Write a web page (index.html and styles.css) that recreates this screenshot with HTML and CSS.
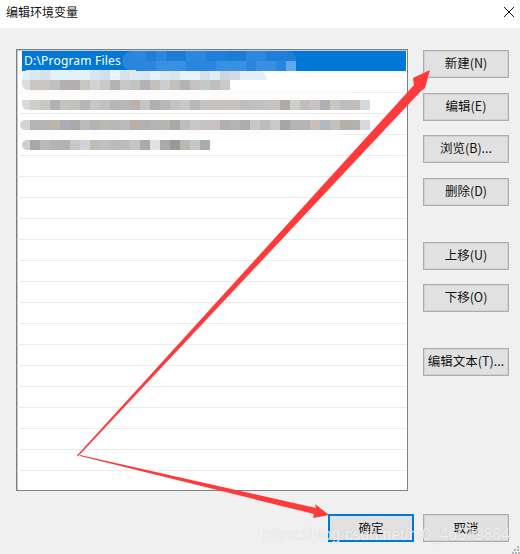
FILE: index.html
```html
<!DOCTYPE html>
<html lang="zh-CN">
<head>
<meta charset="utf-8">
<title>编辑环境变量</title>
<link rel="stylesheet" href="styles.css">
</head>
<body>
<div class="dialog">
  <header class="titlebar">
    <span class="title">编辑环境变量</span>
    <svg class="close" width="12" height="12" viewBox="0 0 12 12"><path d="M1 1 L11 11 M11 1 L1 11" stroke="#111" stroke-width="1" fill="none"/></svg>
  </header>
  <main class="content">
    <div class="list">
      <div class="row selected">D:\Program Files</div>
      <div class="row"></div><div class="row"></div><div class="row"></div><div class="row"></div>
      <div class="row"></div><div class="row"></div><div class="row"></div><div class="row"></div>
      <div class="row"></div><div class="row"></div><div class="row"></div><div class="row"></div>
      <div class="row"></div><div class="row"></div><div class="row"></div><div class="row"></div>
      <div class="row"></div><div class="row"></div><div class="row"></div>
      <div class="smear blue-top"></div>
      <div class="smear blue-bottom"></div>
      <div class="smear blue-cap"></div>
      <div class="smear white-a"></div>
      <div class="smear white-b"></div>
      <div class="smear pale"></div>
      <div class="smear grey-a"></div>
      <div class="smear grey-b"></div>
      <div class="smear grey-c"></div>
      <div class="smear grey-d"></div>
    </div>
    <div class="side">
      <div class="group">
        <button class="btn">新建(N)</button>
        <button class="btn">编辑(E)</button>
        <button class="btn">浏览(B)...</button>
        <button class="btn">删除(D)</button>
      </div>
      <div class="group">
        <button class="btn">上移(U)</button>
        <button class="btn">下移(O)</button>
      </div>
      <div class="group">
        <button class="btn">编辑文本(T)...</button>
      </div>
    </div>
  </main>
  <footer class="footer">
    <button class="btn primary">确定</button>
    <button class="btn">取消</button>
  </footer>
  <svg class="arrows" width="520" height="554" viewBox="0 0 520 554">
    <polygon points="77,455.5 414,85 413,78 430,70 425,88 421,91 78,456.5" fill="#fe3a3a"/>
    <polygon points="80,455 316,508 315,504 329,515 313,518 314,514 80,456" fill="#fe3a3a"/>
  </svg>
  <div class="watermark">https://blog.csdn.net/m0_46579864</div>
  <svg class="grip" width="8" height="8" viewBox="0 0 8 8"><path d="M5 0h2v2H5zM2 3h2v2H2zM5 3h2v2H5zM0 6h2v2H0zM3 6h2v2H3zM6 6h2v2H6z" fill="#b4b4b4"/></svg>
</div>
</body>
</html>
```
FILE: styles.css
```css
* { box-sizing: border-box; }
html, body { margin: 0; padding: 0; }
body {
  width: 520px;
  height: 554px;
  overflow: hidden;
  background: #f0f0f0;
  font-family: "Noto Sans CJK SC", "Noto Sans", sans-serif;
  color: #000;
}
.dialog {
  position: relative;
  width: 520px;
  height: 554px;
  display: flex;
  flex-direction: column;
}
.titlebar {
  height: 28px;
  background: #fff;
  display: flex;
  align-items: center;
  justify-content: space-between;
  padding: 0 5px 4px 6px;
}
.title { font-size: 12px; line-height: 16px; color: #111; }
.close { display: block; }
.content {
  display: flex;
  align-items: flex-start;
  padding: 21px 11px 0 16px;
  gap: 15px;
}
.list {
  position: relative;
  width: 392px;
  height: 442px;
  background: #fff;
  border: 1px solid #7b8087;
  box-shadow: inset 1px 1px 0 #c6c8cb;
  padding: 1px 1px 1px 5px;
  overflow: hidden;
}
.row {
  height: 21px;
  margin-left: -5px;
  border-bottom: 1px solid #ebebeb;
}
.row.selected {
  margin-left: 0;
  height: 20px;
  margin-bottom: 1px;
  border-bottom: 0;
  background: #0078d7;
  color: #fff;
  font-family: "Noto Sans", sans-serif;
  font-size: 12px;
  line-height: 20px;
  padding-left: 2px;
  letter-spacing: 0.2px;
}
.smear { position: absolute; height: 10px; }
.blue-cap { left: 105px; top: 1px; width: 30px; height: 20px; background: #2a86dc; border-radius: 10px 0 0 10px; }
.blue-top {
  left: 119px; top: 1px; width: 160px;
  background: linear-gradient(90deg, #2a88dd 0 10px, #1e80da 10px 20px, #2a88de 20px 30px, #1a7ed9 30px 50px, #2a88dd 50px 70px, #1e80da 70px 90px, #1a7ed9 90px 110px, #2a88de 110px 130px, #1c80da 130px 160px);
  border-radius: 0 8px 0 0;
  z-index: 1;
}
.blue-bottom {
  left: 119px; top: 11px; width: 160px;
  background: linear-gradient(90deg, #2a86dc 0 20px, #3a90e0 20px 50px, #2a86dc 50px 80px, #3a90e0 80px 110px, #2a86dc 110px 120px, #3a90e0 120px 140px, #2a86dc 140px 150px, #60a8e8 150px 160px);
  z-index: 1;
}
.white-a { left: 5px; top: 40px; width: 330px; background: #fcfcfc; }
.white-b { left: 4px; top: 80px; width: 320px; background: #fdfdfd; }
.pale {
  left: 5px; top: 20px; width: 245px; border-radius: 6px 10px 0 0;
  background: linear-gradient(90deg, #e4f0f8 0 8px, #dbe8f0 8px 18px, #d5e2ea 18px 28px, #e5f1fa 28px 68px, #d9e5ef 68px 78px, #d2deea 78px 88px, #e8f3fb 88px 98px, #d6e3ed 98px 108px, #ddeaf3 108px 118px, #dae7ef 118px 128px, #e6f1f9 128px 138px, #dce9f2 138px 148px, #d8e5ee 148px 158px, #e8f2fa 158px 178px, #d5e2ec 178px 188px, #e0edf6 188px 198px, #ccd6de 198px 208px, #d2dbe2 208px 218px, #e2eef8 218px 245px);
}
.grey-a {
  left: 5px; top: 30px; width: 208px; border-radius: 0 0 0 6px;
  background: linear-gradient(90deg, #dcdcdc 0 8px, #c8c5c3 8px 18px, #c9c6c3 18px 28px, #c0c0c2 28px 38px, #b2b1af 38px 48px, #b2afae 48px 58px, #c8c8c2 58px 68px, #d3d3d6 68px 78px, #ccc8c6 78px 88px, #b3b3b4 88px 98px, #c8c8ca 98px 108px, #c3c2bd 108px 118px, #b2b1b5 118px 128px, #c5c0be 128px 138px, #cacecf 138px 148px, #c3c0bc 148px 158px, #b3b3b5 158px 168px, #c7c2c1 168px 178px, #c5c8cb 178px 188px, #c0bdba 188px 198px, #c9c9cb 198px 208px);
}
.grey-b {
  left: 5px; top: 50px; width: 348px; border-radius: 0 0 0 6px;
  background: linear-gradient(90deg, #dadada 0 8px, #cfcecd 8px 18px, #c9c9c4 18px 28px, #b3b1af 28px 38px, #c5c3c1 38px 48px, #c3c1bd 48px 58px, #b5b5b6 58px 68px, #c8c6c2 68px 78px, #c1c1c4 78px 88px, #b8b5b3 88px 98px, #b6b8ba 98px 108px, #bcb2aa 108px 118px, #c3c5c9 118px 128px, #b0afae 128px 138px, #b8b8bb 138px 148px, #c6c2bf 148px 158px, #c8c8ca 158px 168px, #b8b8b8 168px 178px, #c6c3c2 178px 188px, #c6c3c0 188px 218px, #c0bebc 218px 228px, #c2c0c0 228px 238px, #c2c2c4 238px 248px, #c6c5c2 248px 258px, #aeaaa6 258px 268px, #ccd0ca 268px 278px, #c0bcc0 278px 288px, #c6c4c4 288px 298px, #b0aeb0 298px 308px, #c8c8c2 308px 318px, #bfbcbf 318px 328px, #c0bcb8 328px 338px, #d5d9dd 338px 348px);
}
.grey-c {
  left: 3px; top: 70px; width: 350px; border-radius: 5px 0 0 5px;
  background: linear-gradient(90deg, #d5d3d0 0 10px, #b4b4b6 10px 20px, #b6b3b2 20px 30px, #bcb5ad 30px 40px, #a9adb5 40px 50px, #abaaab 50px 60px, #bdb9b6 60px 70px, #b1b4b6 70px 80px, #bdbab4 80px 90px, #b9b8b6 90px 100px, #bbbbbb 100px 110px, #b8b0a6 110px 120px, #aeb2b8 120px 130px, #b5b4b4 130px 140px, #b5b5b2 140px 150px, #aca7a7 150px 160px, #bdbdbb 160px 170px, #c8c8c8 170px 180px, #c7c2bd 180px 190px, #c7c2bf 190px 200px, #b0b0b2 200px 210px, #b5b4b2 210px 220px, #acaeac 220px 230px, #c8c8c8 230px 240px, #bcbcbc 240px 250px, #c8cac8 250px 260px, #a8a6a2 260px 270px, #b5b5b2 270px 280px, #b3b4b8 280px 290px, #c8c0b8 290px 300px, #b0b8c2 300px 310px, #c3c0bc 310px 320px, #b3b0ac 320px 330px, #b3b1ae 330px 340px, #d8d9dc 340px 350px);
}
.grey-d {
  left: 5px; top: 90px; width: 188px; border-radius: 6px 0 0 6px;
  background: linear-gradient(90deg, #d0cecb 0 8px, #a9a8a7 8px 18px, #bcb9b7 18px 28px, #b2b5b8 28px 38px, #b1b3b5 38px 48px, #c9c9c3 48px 58px, #d2d3da 58px 68px, #bfbdb8 68px 78px, #c0c1c5 78px 88px, #bcbbb9 88px 98px, #c0bbb9 98px 108px, #c4c6c4 108px 118px, #aaaaa9 118px 128px, #e0e3dd 128px 138px, #a9a8ac 138px 148px, #999998 148px 158px, #bbb8b4 158px 168px, #c6c8c4 168px 178px, #a8adb0 178px 188px);
}
.side {
  width: 86px;
  padding-top: 1px;
  display: flex;
  flex-direction: column;
  gap: 36px;
}
.group { display: flex; flex-direction: column; gap: 14.5px; }
.btn {
  width: 86px;
  height: 28px;
  padding: 0;
  background: #e1e1e1;
  border: 1px solid #adadad;
  box-shadow: inset 0 0 0 1px #d2d2d2;
  border-radius: 0;
  font-family: "Noto Sans CJK SC", "Noto Sans", sans-serif;
  font-size: 12.5px;
  line-height: 24px;
  color: #111;
  white-space: nowrap;
}
.side .btn { padding-bottom: 2px; }
.btn.primary { border: 2px solid #0078d7; box-shadow: none; }
.footer {
  display: flex;
  justify-content: flex-end;
  gap: 9px;
  padding: 23px 11px 0 0;
}
.arrows { position: absolute; left: 0; top: 0; pointer-events: none; }
.watermark {
  position: absolute;
  left: 263px;
  top: 524px;
  font-family: "Liberation Sans", sans-serif;
  font-size: 15.8px;
  line-height: 22px;
  color: rgba(255, 255, 255, 0.72);
  text-shadow: 0 0 1px rgba(170, 170, 170, 0.5);
  white-space: nowrap;
}
.grip { position: absolute; right: 0; bottom: 0; }
```
